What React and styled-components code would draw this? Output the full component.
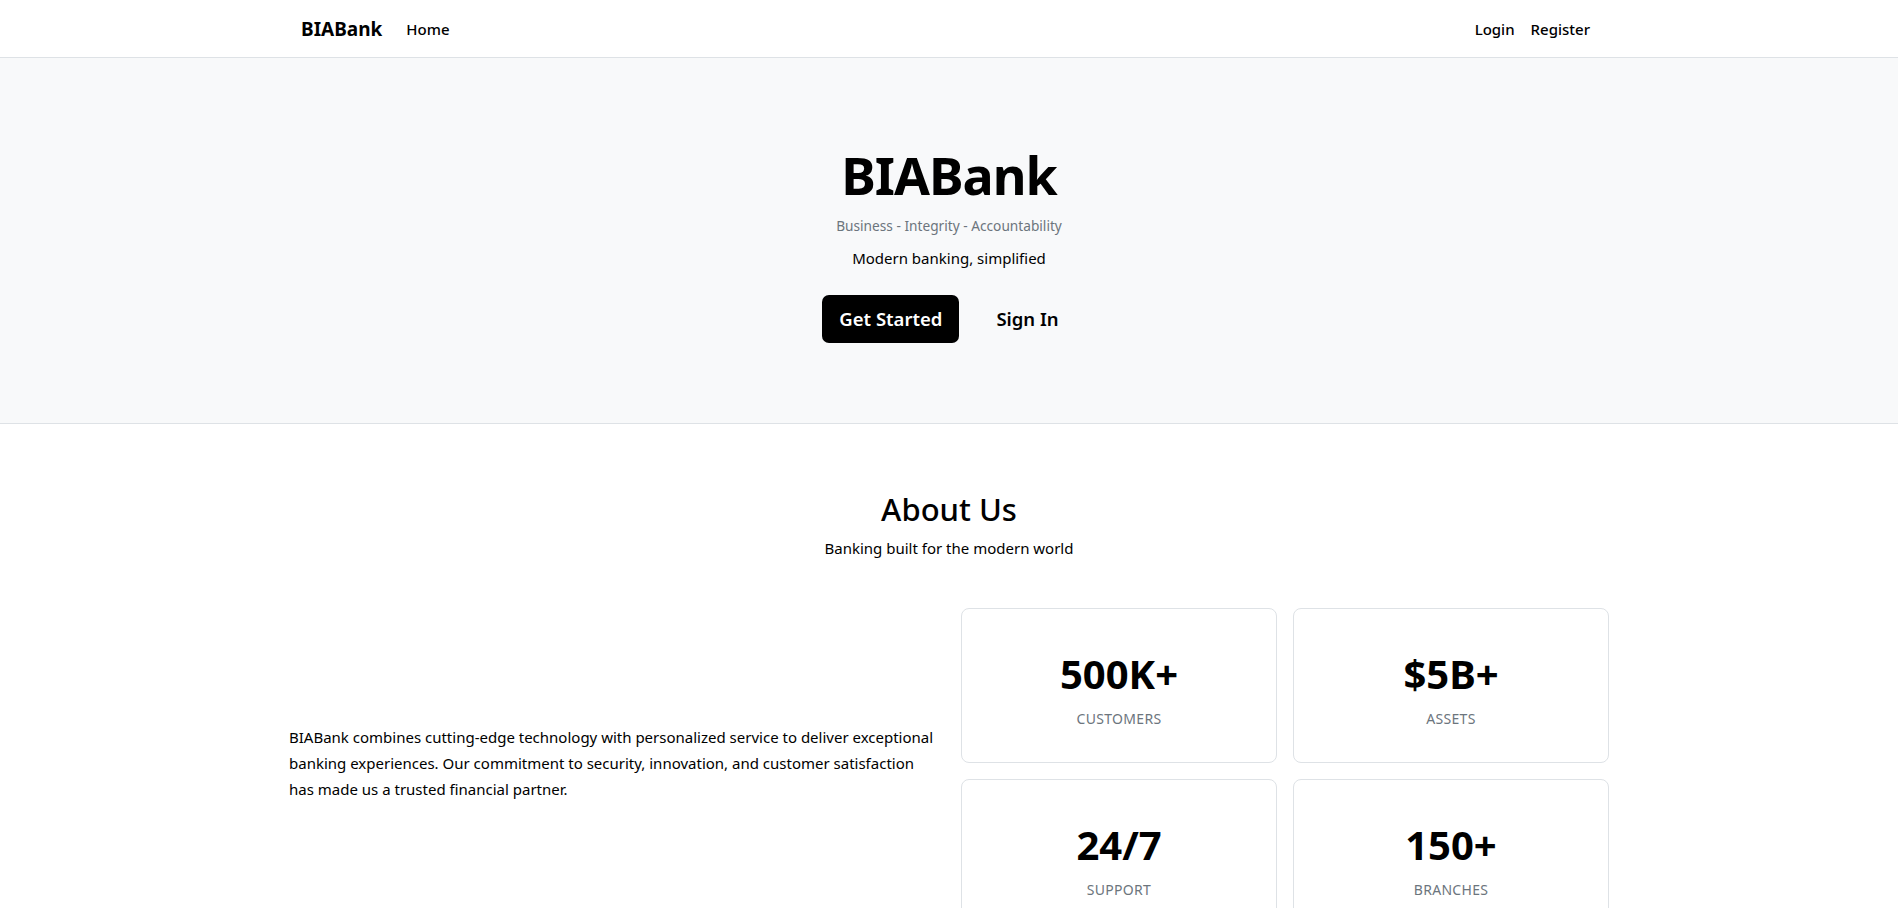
import React from "react";
import styled, { createGlobalStyle } from "styled-components";

const GlobalStyle = createGlobalStyle`
  * { box-sizing: border-box; }
  body {
    margin: 0;
    font-family: "Noto Sans", "Open Sans", sans-serif;
    color: #212529;
    background: #ffffff;
  }
`;

const stats = [
  { value: "500K+", label: "Customers" },
  { value: "$5B+", label: "Assets" },
  { value: "24/7", label: "Support" },
  { value: "150+", label: "Branches" },
];

export default function App() {
  return (
    <>
      <GlobalStyle />
      <Navbar>
        <NavInner>
          <NavLeft>
            <Brand>BIABank</Brand>
            <NavLink>Home</NavLink>
          </NavLeft>
          <NavRight>
            <NavLink>Login</NavLink>
            <NavLink>Register</NavLink>
          </NavRight>
        </NavInner>
      </Navbar>

      <Hero>
        <HeroTitle>BIABank</HeroTitle>
        <Tagline>Business - Integrity - Accountability</Tagline>
        <Lead>Modern banking, simplified</Lead>
        <Actions>
          <PrimaryButton>Get Started</PrimaryButton>
          <LinkButton>Sign In</LinkButton>
        </Actions>
      </Hero>

      <About>
        <SectionTitle>About Us</SectionTitle>
        <SectionSub>Banking built for the modern world</SectionSub>
        <AboutGrid>
          <AboutText>
            BIABank combines cutting-edge technology with personalized service
            to deliver exceptional banking experiences. Our commitment to
            security, innovation, and customer satisfaction has made us a
            trusted financial partner.
          </AboutText>
          <StatsGrid>
            {stats.map((item) => (
              <StatCard key={item.label}>
                <StatValue>{item.value}</StatValue>
                <StatLabel>{item.label}</StatLabel>
              </StatCard>
            ))}
          </StatsGrid>
        </AboutGrid>
      </About>
    </>
  );
}

const Navbar = styled.nav`
  height: 58px;
  border-bottom: 1px solid #dee2e6;
  background: #ffffff;
`;

const NavInner = styled.div`
  width: 1320px;
  height: 100%;
  margin: 0 auto;
  padding: 0 19px 0 12px;
  display: flex;
  align-items: center;
  justify-content: space-between;
`;

const NavLeft = styled.div`
  display: flex;
  align-items: center;
  gap: 24px;
`;

const NavRight = styled.div`
  display: flex;
  align-items: center;
  gap: 16px;
`;

const Brand = styled.span`
  font-size: 19px;
  font-weight: 700;
  color: #000;
`;

const NavLink = styled.a`
  font-size: 15px;
  font-weight: 500;
  color: #000;
  cursor: pointer;
`;

const Hero = styled.section`
  background: #f8f9fa;
  border-bottom: 1px solid #dee2e6;
  padding: 80px 0;
  display: flex;
  flex-direction: column;
  align-items: center;
`;

const HeroTitle = styled.h1`
  margin: 2px 0 0;
  font-size: 52px;
  font-weight: 700;
  line-height: 70px;
  letter-spacing: -1px;
  color: #000;
`;

const Tagline = styled.p`
  margin: 6px 0 0;
  font-size: 13.7px;
  line-height: 19.5px;
  color: #6c757d;
`;

const Lead = styled.p`
  margin: 11px 0 0;
  font-size: 15px;
  line-height: 22.5px;
  color: #000;
`;

const Actions = styled.div`
  margin-top: 25.5px;
  display: flex;
  align-items: center;
  gap: 20px;
`;

const PrimaryButton = styled.button`
  height: 48px;
  padding: 0 17px;
  border: none;
  border-radius: 7px;
  background: #000;
  color: #fff;
  font-family: inherit;
  font-size: 18.5px;
  font-weight: 600;
  cursor: pointer;
`;

const LinkButton = styled(PrimaryButton)`
  background: transparent;
  color: #000;
`;

const About = styled.section`
  width: 1320px;
  margin: 0 auto;
  padding-top: 67px;
  display: flex;
  flex-direction: column;
  align-items: center;
`;

const SectionTitle = styled.h2`
  margin: 0;
  font-size: 31px;
  font-weight: 500;
  line-height: 1.2;
  color: #000;
`;

const SectionSub = styled.p`
  margin: 9px 0 0;
  font-size: 15px;
  line-height: 1.5;
  color: #000;
`;

const AboutGrid = styled.div`
  width: 100%;
  margin-top: 49px;
  display: grid;
  grid-template-columns: 1fr 1fr;
  gap: 24px;
  align-items: center;
`;

const AboutText = styled.p`
  margin: 0 0 16px;
  font-size: 15px;
  line-height: 26px;
  color: #000;
`;

const StatsGrid = styled.div`
  display: grid;
  grid-template-columns: 1fr 1fr;
  gap: 16px;
`;

const StatCard = styled.div`
  height: 155px;
  border: 1px solid #dee2e6;
  border-radius: 8px;
  padding-top: 41px;
  display: flex;
  flex-direction: column;
  align-items: center;
`;

const StatValue = styled.div`
  font-size: 40px;
  font-weight: 700;
  line-height: 48px;
  color: #000;
`;

const StatLabel = styled.div`
  margin-top: 10px;
  font-size: 14px;
  line-height: 21px;
  letter-spacing: 0.3px;
  text-transform: uppercase;
  color: #6c757d;
`;
